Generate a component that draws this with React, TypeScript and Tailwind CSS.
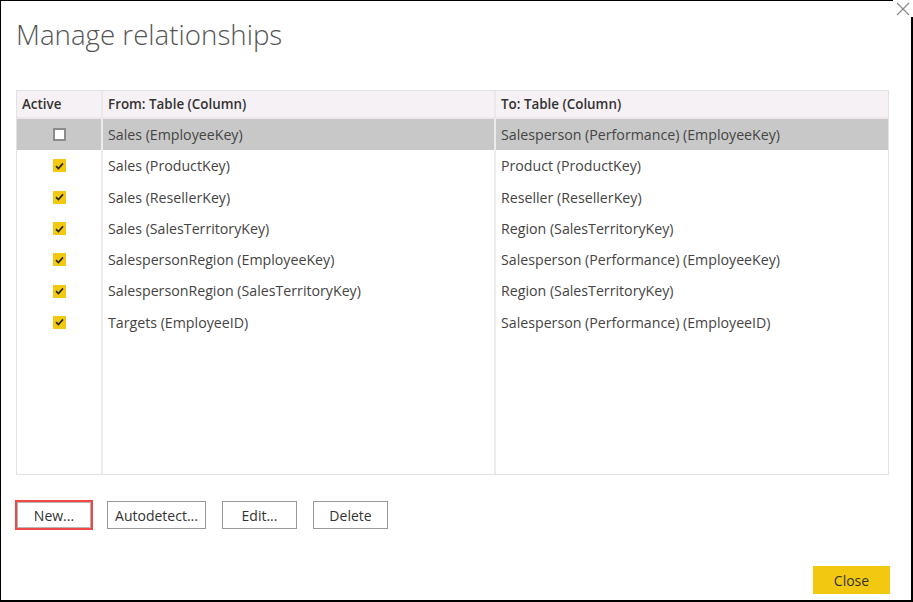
import React from 'react'

const rows: { active: boolean; from: string; to: string }[] = [
  { active: false, from: 'Sales (EmployeeKey)', to: 'Salesperson (Performance) (EmployeeKey)' },
  { active: true, from: 'Sales (ProductKey)', to: 'Product (ProductKey)' },
  { active: true, from: 'Sales (ResellerKey)', to: 'Reseller (ResellerKey)' },
  { active: true, from: 'Sales (SalesTerritoryKey)', to: 'Region (SalesTerritoryKey)' },
  { active: true, from: 'SalespersonRegion (EmployeeKey)', to: 'Salesperson (Performance) (EmployeeKey)' },
  { active: true, from: 'SalespersonRegion (SalesTerritoryKey)', to: 'Region (SalesTerritoryKey)' },
  { active: true, from: 'Targets (EmployeeID)', to: 'Salesperson (Performance) (EmployeeID)' },
]

function Checkbox({ checked }: { checked: boolean }) {
  if (!checked) {
    return <span className="block w-[13px] h-[13px] bg-white border-2 border-[#8c8c8c]" />
  }
  return (
    <span className="flex items-center justify-center w-[13px] h-[13px] bg-[#f2c811]">
      <svg width="9" height="8" viewBox="0 0 9 8">
        <path d="M1 4.2 L3.4 6.5 L8 1.4" fill="none" stroke="#222" strokeWidth="1.6" />
      </svg>
    </span>
  )
}

export default function App() {
  return (
    <div
      className="relative w-[913px] h-[602px] bg-white border-t border-l border-r-2 border-b-2 border-black text-[#333]"
      style={{ fontFamily: '"Open Sans", "Noto Sans", sans-serif' }}
    >
      {/* close glyph sits over the corner */}
      <div className="absolute -top-px -right-[2px] w-[20px] h-[17px] bg-white flex items-start justify-center pt-[2px]">
        <svg width="14" height="14" viewBox="0 0 14 14">
          <path d="M1 1 L13 13 M13 1 L1 13" stroke="#8a8a8a" strokeWidth="1.2" />
        </svg>
      </div>

      <h1 className="pl-[15px] pt-[14px] text-[27.7px] leading-[38px] font-light text-[#555]">
        Manage relationships
      </h1>

      {/* table */}
      <div className="ml-[15px] mt-[37px] w-[873px] h-[385px] border border-[#e2e2e2] flex flex-col text-[14.2px]">
        <div className="grid grid-cols-[86px_393px_1fr] h-[28px] bg-[#f6f1f4] border-b-2 border-[#ece8ea] text-[13.4px] font-semibold text-[#333]">
          <div className="flex items-center pl-[5px] border-r-2 border-[#ece8ea]">Active</div>
          <div className="flex items-center pl-[5px] border-r-2 border-[#ece8ea]">From: Table (Column)</div>
          <div className="flex items-center pl-[5px]">To: Table (Column)</div>
        </div>
        {rows.map((r, i) => (
          <div
            key={i}
            className={`grid grid-cols-[86px_393px_1fr] h-[31.3px] text-[#444] ${i === 0 ? 'bg-[#c8c8c8]' : 'bg-white'}`}
          >
            <div className="flex items-center justify-center border-r-2 border-[#ececec]">
              <Checkbox checked={r.active} />
            </div>
            <div className="flex items-center pl-[5px] border-r-2 border-[#ececec]">{r.from}</div>
            <div className="flex items-center pl-[5px]">{r.to}</div>
          </div>
        ))}
        <div className="grid grid-cols-[86px_393px_1fr] flex-1">
          <div className="border-r-2 border-[#ececec]" />
          <div className="border-r-2 border-[#ececec]" />
          <div />
        </div>
      </div>

      {/* action buttons */}
      <div className="flex items-center gap-[16px] ml-[14px] mt-[25px] text-[14px] text-[#333]">
        <div className="border-2 border-[#f04747] mr-[-2px]">
          <button className="w-[74px] h-[26px] bg-white border border-[#b5b5b5]">New...</button>
        </div>
        <button className="w-[99px] h-[28px] bg-white border border-[#999]">Autodetect...</button>
        <button className="w-[75px] h-[28px] bg-white border border-[#999]">Edit...</button>
        <button className="w-[75px] h-[28px] bg-white border border-[#999]">Delete</button>
      </div>

      <div className="flex justify-end mr-[21px] mt-[36px]">
        <button className="w-[77px] h-[28px] bg-[#f2c811] text-[14px] text-[#333]">Close</button>
      </div>
    </div>
  )
}
